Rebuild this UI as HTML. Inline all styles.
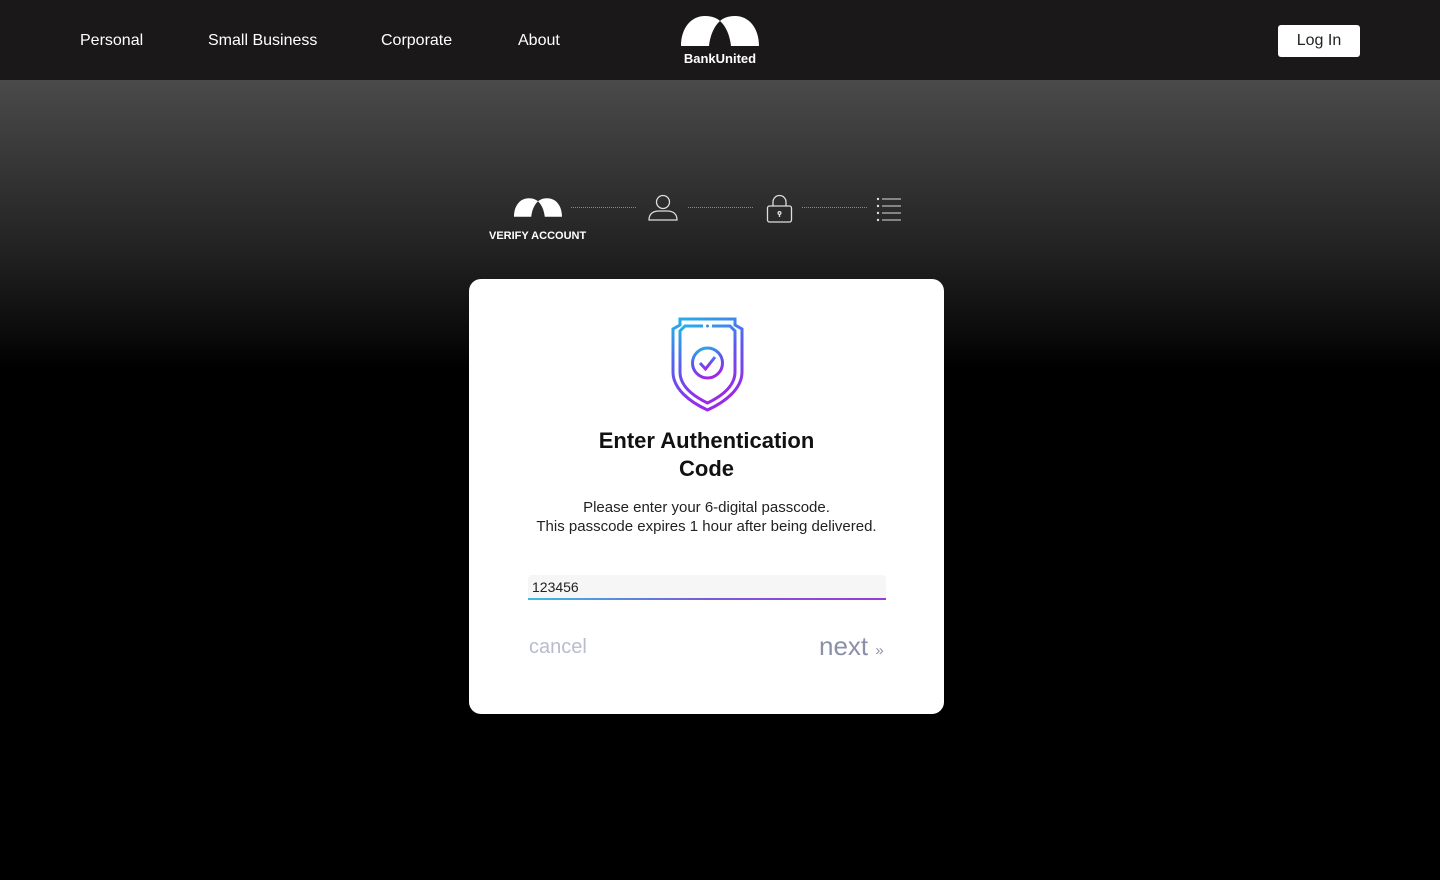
<!DOCTYPE html>
<html><head><style>
*{margin:0;padding:0;box-sizing:border-box}
body{width:1440px;height:880px;overflow:hidden;font-family:"Liberation Sans",sans-serif;background:linear-gradient(#4a4a4a 80px,#222 250px,#000 370px,#000);position:relative;color:#fff}
.hdr{position:absolute;top:0;left:0;width:1440px;height:80px;background:#1a1819}
.nav{position:absolute;top:32px;font-size:16px;color:#fff}
.login{position:absolute;left:1278px;top:25px;width:82px;height:32px;background:#fff;color:#222;border-radius:3px;font-size:16px;text-align:center;line-height:32px}
.dots{position:absolute;top:207px;height:0;border-top:1px dotted #888}
.card{position:absolute;left:469px;top:279px;width:475px;height:435px;background:#fff;border-radius:12px;color:#111;text-align:center}
</style></head><body>
<div class="hdr">
<div class="nav" style="left:80px">Personal</div>
<div class="nav" style="left:208px">Small Business</div>
<div class="nav" style="left:381px">Corporate</div>
<div class="nav" style="left:518px">About</div>
<svg style="position:absolute;left:681px;top:16px" width="78" height="30" viewBox="0 0 78 30"><path fill="#fff" d="M0 30 C0 12 10 0 24 0 C32 0 37 3 39 5 C33 10 29 20 28 30 Z M78 30 C78 12 68 0 54 0 C46 0 41 3 39 5 C45 10 49 20 50 30 Z"/></svg>
<div style="position:absolute;left:680px;top:51px;width:80px;text-align:center;font-size:13px;font-weight:bold;color:#fff">BankUnited</div>
<div class="login">Log In</div>
</div>
<svg style="position:absolute;left:514px;top:198px" width="48" height="19" viewBox="0 0 78 30"><path fill="#fff" d="M0 30 C0 12 10 0 24 0 C32 0 37 3 39 5 C33 10 29 20 28 30 Z M78 30 C78 12 68 0 54 0 C46 0 41 3 39 5 C45 10 49 20 50 30 Z"/></svg>
<div style="position:absolute;left:489px;top:230px;font-size:11px;font-weight:bold;color:#fff">VERIFY ACCOUNT</div>
<div class="dots" style="left:571px;width:65px"></div>
<div class="dots" style="left:688px;width:65px"></div>
<div class="dots" style="left:802px;width:65px"></div>
<svg style="position:absolute;left:647px;top:194px" width="32" height="28" fill="none" stroke="#ddd" stroke-width="1.3"><circle cx="16" cy="8" r="6.5"/><path d="M2 26 C2 19 7 17 12 17 H20 C25 17 30 19 30 26 Z"/></svg>
<svg style="position:absolute;left:766px;top:194px" width="28" height="30" fill="none" stroke="#ddd" stroke-width="1.3"><path d="M7 12 V8 A6.5 6.5 0 0 1 20 8 V12"/><rect x="1.5" y="12" width="24" height="16" rx="2"/><circle cx="13.5" cy="19" r="1.4"/><path d="M13.5 20 V23"/></svg>
<svg style="position:absolute;left:876px;top:197px" width="26" height="26" stroke="#ddd" fill="#ddd"><circle cx="2" cy="2" r="1.2" stroke="none"/><circle cx="2" cy="9" r="1.2" stroke="none"/><circle cx="2" cy="16" r="1.2" stroke="none"/><circle cx="2" cy="23" r="1.2" stroke="none"/><path d="M6 2H25M6 9H25M6 16H25M6 23H25" stroke-width="1"/></svg>
<div class="card">
<svg style="position:absolute;left:201px;top:38px" width="75" height="95" viewBox="0 0 75 95" fill="none" stroke="url(#g)" stroke-width="3"><defs><linearGradient id="g" x1="0" y1="0" x2="0.3" y2="1"><stop offset="0" stop-color="#22b4e8"/><stop offset="0.5" stop-color="#5a5af0"/><stop offset="1" stop-color="#9a2ae8"/></linearGradient></defs>
<path d="M10 2 H65 V8 L72 12 V55 C72 72 55 85 37.5 93 C20 85 3 72 3 55 V12 L10 8 Z"/>
<path d="M33 9 H15 L10 14 V55 C10 69 23 79 37.5 86 C52 79 65 69 65 55 V14 L60 9 H42"/>
<circle cx="37.5" cy="9" r="1.5" fill="#3a8ae8" stroke="none"/>
<circle cx="37.5" cy="46" r="15"/><path d="M30 46 L35.5 52 L45 40"/></svg>
<div style="position:absolute;left:0;width:475px;top:148px;font-size:22px;font-weight:bold;line-height:28px">Enter Authentication<br>Code</div>
<div style="position:absolute;left:0;width:475px;top:219px;font-size:15px;line-height:19px;color:#222">Please enter your 6-digital passcode.<br>This passcode expires 1 hour after being delivered.</div>
<div style="position:absolute;left:59px;top:296px;width:358px;height:25px;background:#f6f6f6;border-radius:4px 4px 0 0;border-bottom:2px solid;border-image:linear-gradient(90deg,#3bbce0,#7a5ad8,#9a3ad8) 1;text-align:left;font-size:14px;padding:4px 0 0 4px;color:#222">123456</div>
<div style="position:absolute;left:60px;top:357px;font-size:20px;color:#b8bccc">cancel</div>
<div style="position:absolute;left:350px;top:352px;font-size:26px;color:#8a90a8">next <span style="font-size:15px">»</span></div>
</div>
</body></html>
